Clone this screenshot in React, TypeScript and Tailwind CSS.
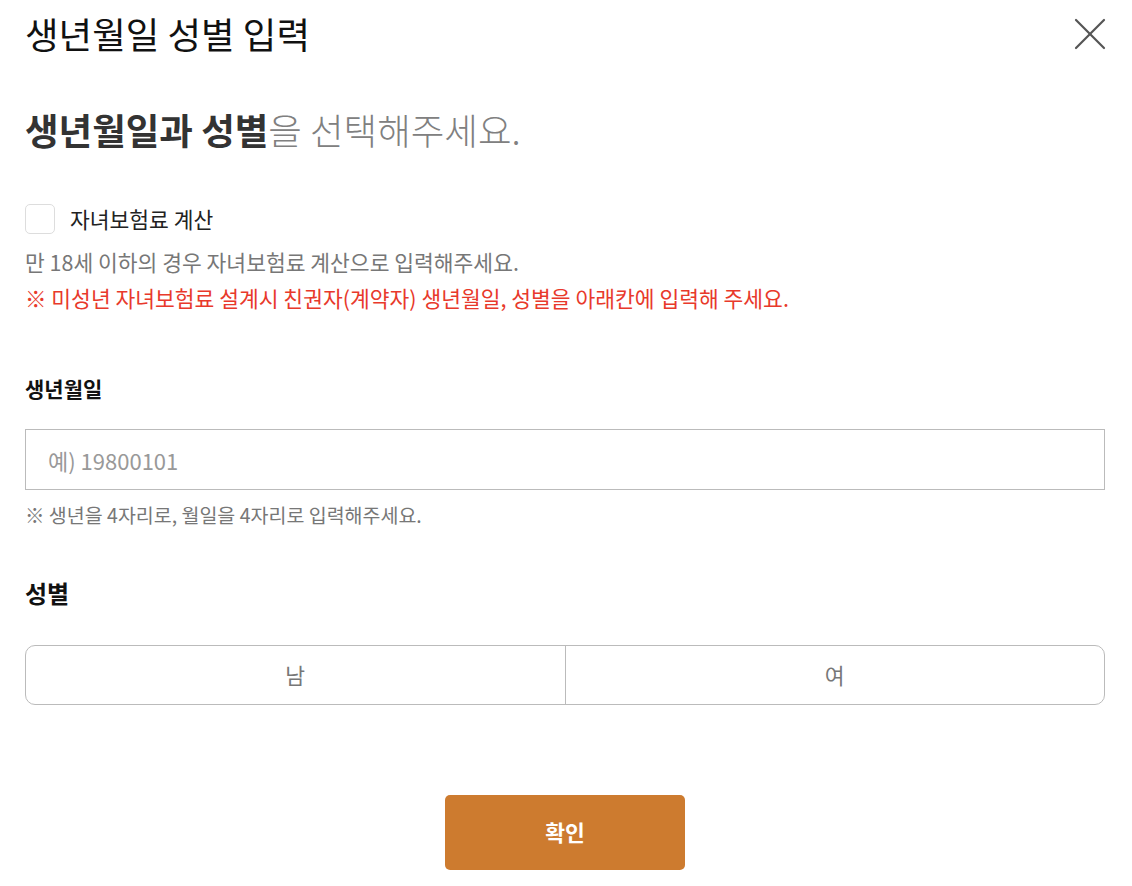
import { useState } from 'react'

const FONT = '"Noto Sans CJK KR", "Noto Sans", sans-serif'

export default function App() {
  const [child, setChild] = useState(false)
  const [birth, setBirth] = useState('')
  const [gender, setGender] = useState<'M' | 'F' | ''>('')

  return (
    <div className="min-h-screen bg-white pl-[25px] pr-[27px]" style={{ fontFamily: FONT }}>
      {/* header */}
      <div className="flex items-center justify-between pt-[10px] h-[58px]">
        <h1 className="text-[36.5px] leading-[48px] text-[#111]">생년월일 성별 입력</h1>
        <button className="w-[34px] h-[34px] -mr-[2px] flex items-center justify-center text-[#555]">
          <svg width="32" height="32" viewBox="0 0 32 32" fill="none" stroke="currentColor" strokeWidth="2.2" strokeLinecap="round">
            <line x1="2" y1="2" x2="30" y2="30" />
            <line x1="30" y1="2" x2="2" y2="30" />
          </svg>
        </button>
      </div>

      <p className="mt-[49px] text-[36.5px] leading-[46px]">
        <span className="font-bold text-[#333]">생년월일과 성별</span>
        <span className="font-light text-[#808080]">을 선택해주세요.</span>
      </p>

      {/* child checkbox */}
      <label className="mt-[51px] flex items-center gap-[15px] cursor-pointer">
        <span
          onClick={() => setChild(!child)}
          className={`w-[30px] h-[30px] rounded-[5px] border flex items-center justify-center ${child ? 'bg-[#cd7b2f] border-[#cd7b2f]' : 'bg-white border-[#ddd]'}`}
        >
          {child && (
            <svg width="16" height="16" viewBox="0 0 16 16" fill="none" stroke="white" strokeWidth="2">
              <path d="M3 8.5l3.5 3.5L13 4.5" />
            </svg>
          )}
        </span>
        <span className="text-[21.5px] leading-[30px] text-[#222]">자녀보험료 계산</span>
      </label>

      <div className="mt-[10px] text-[21.5px] leading-[36px]">
        <p className="text-[#777]">만 18세 이하의 경우 자녀보험료 계산으로 입력해주세요.</p>
        <p className="text-[#e8392b]">※ 미성년 자녀보험료 설계시 친권자(계약자) 생년월일, 성별을 아래칸에 입력해 주세요.</p>
      </div>

      {/* birth */}
      <h2 className="mt-[57px] text-[21px] leading-[30px] font-bold text-[#111]">생년월일</h2>
      <input
        value={birth}
        onChange={e => setBirth(e.target.value)}
        placeholder="예) 19800101"
        className="mt-[26px] block w-full h-[61px] border border-[#bbb] px-[22px] text-[22px] text-[#333] placeholder:text-[#999] outline-none"
      />
      <p className="mt-[11px] text-[19.5px] leading-[28px] text-[#777]">※ 생년을 4자리로, 월일을 4자리로 입력해주세요.</p>

      {/* gender */}
      <h2 className="mt-[48px] text-[24px] leading-[32px] font-bold text-[#111]">성별</h2>
      <div className="mt-[36px] flex h-[60px] border border-[#bbb] rounded-[10px] overflow-hidden">
        <button
          onClick={() => setGender('M')}
          className={`flex-1 text-[21.5px] ${gender === 'M' ? 'text-[#cd7b2f]' : 'text-[#777]'}`}
        >남</button>
        <div className="w-px bg-[#bbb]" />
        <button
          onClick={() => setGender('F')}
          className={`flex-1 text-[21.5px] ${gender === 'F' ? 'text-[#cd7b2f]' : 'text-[#777]'}`}
        >여</button>
      </div>

      <div className="mt-[90px] flex justify-center">
        <button className="w-[240px] h-[75px] rounded-[5px] bg-[#cd7b2f] text-white text-[21.5px] font-bold">확인</button>
      </div>
    </div>
  )
}
